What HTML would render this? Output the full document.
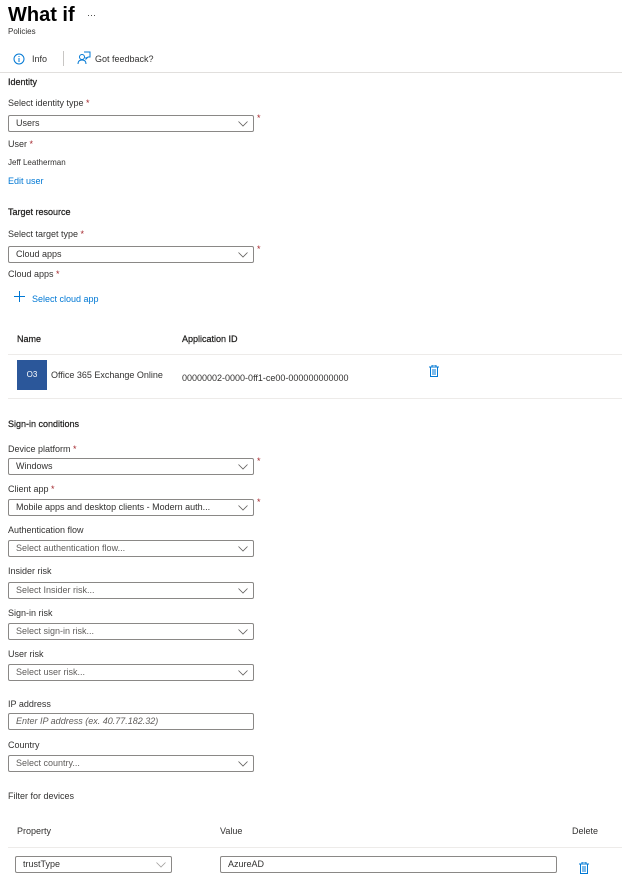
<!DOCTYPE html>
<html><head><meta charset="utf-8"><style>
*{margin:0;padding:0;box-sizing:border-box}
body{width:622px;height:886px;background:#fff;font-family:"Liberation Sans",sans-serif;font-size:9px;color:#323130;position:relative;overflow:hidden}
.a{position:absolute;white-space:nowrap;line-height:12px}
.s{color:#a4262c}
.h{color:#201f1e;-webkit-text-stroke:0.25px #201f1e}
.dd{position:absolute;left:8px;width:246px;height:17px;border:1px solid #8a8886;border-radius:2px;padding-left:7px;line-height:15px;font-size:9px}
.dd.ph{color:#605e5c}
.dd svg{position:absolute;right:5px;top:5px}
.ln{position:absolute;height:1px;background:#edebe9}
.b{color:#0078d4}
</style></head><body>
<div class="a" style="left:8px;top:2px;font-size:20px;line-height:26px;font-weight:bold;color:#000">What if</div>
<div class="a" style="left:87px;top:9px;font-size:9px">···</div>
<div class="a" style="left:8px;top:26px;font-size:8px">Policies</div>
<svg class="a" style="left:13px;top:53px" width="12" height="12" viewBox="0 0 12 12"><circle cx="6" cy="6" r="5" fill="none" stroke="#0078d4" stroke-width="1"/><path d="M6 5v4M6 3v1" stroke="#0078d4" stroke-width="1"/></svg>
<div class="a" style="left:32px;top:53px">Info</div>
<div style="position:absolute;left:63px;top:51px;width:1px;height:15px;background:#c8c6c4"></div>
<svg class="a" style="left:77px;top:51px" width="14" height="14" viewBox="0 0 14 14"><circle cx="5" cy="6" r="2.5" fill="none" stroke="#0078d4"/><path d="M1 13c0-3 2-4 4-4s4 1 4 4M7 1h6v5h-2l-2 2V6" fill="none" stroke="#0078d4"/></svg>
<div class="a" style="left:95px;top:53px">Got feedback?</div>
<div class="ln" style="left:0;top:72px;width:622px;background:#e1dfdd"></div>
<div class="a h" style="left:8px;top:76px">Identity</div>
<div class="a" style="left:8px;top:97px">Select identity type <span class="s">*</span></div>
<div class="dd" style="top:115px">Users<svg width="10" height="6"><path d="M0.5 0.5l4.5 4.5 4.5-4.5" fill="none" stroke="#605e5c" stroke-width="0.8"/></svg></div>
<div class="a s" style="left:257px;top:112px">*</div>
<div class="a" style="left:8px;top:138px">User <span class="s">*</span></div>
<div class="a" style="left:8px;top:157px;font-size:8px">Jeff Leatherman</div>
<div class="a b" style="left:8px;top:175px">Edit user</div>
<div class="a h" style="left:8px;top:206px">Target resource</div>
<div class="a" style="left:8px;top:228px">Select target type <span class="s">*</span></div>
<div class="dd" style="top:246px">Cloud apps<svg width="10" height="6"><path d="M0.5 0.5l4.5 4.5 4.5-4.5" fill="none" stroke="#605e5c" stroke-width="0.8"/></svg></div>
<div class="a s" style="left:257px;top:243px">*</div>
<div class="a" style="left:8px;top:268px">Cloud apps <span class="s">*</span></div>
<svg class="a" style="left:14px;top:291px" width="11" height="11"><path d="M5.5 0v11M0 5.5h11" stroke="#0078d4"/></svg>
<div class="a b" style="left:32px;top:293px">Select cloud app</div>
<div class="a h" style="left:17px;top:333px">Name</div>
<div class="a h" style="left:182px;top:333px">Application ID</div>
<div class="ln" style="left:8px;top:354px;width:614px"></div>
<div style="position:absolute;left:17px;top:360px;width:30px;height:30px;background:#2b579a;color:#fff;font-size:8px;line-height:30px;text-align:center">O3</div>
<div class="a" style="left:51px;top:369px">Office 365 Exchange Online</div>
<div class="a" style="left:182px;top:372px">00000002-0000-0ff1-ce00-000000000000</div>
<svg class="a" style="left:429px;top:365px" width="10" height="12" viewBox="0 0 10 12"><path d="M0 2h10M3 2V0h4v2M1.5 2.5v9h7v-9M4 4v6M6 4v6" fill="none" stroke="#0078d4"/></svg>
<div class="ln" style="left:8px;top:398px;width:614px"></div>
<div class="a h" style="left:8px;top:418px">Sign-in conditions</div>
<div class="a" style="left:8px;top:443px">Device platform <span class="s">*</span></div>
<div class="dd" style="top:458px">Windows<svg width="10" height="6"><path d="M0.5 0.5l4.5 4.5 4.5-4.5" fill="none" stroke="#605e5c" stroke-width="0.8"/></svg></div>
<div class="a s" style="left:257px;top:455px">*</div>
<div class="a" style="left:8px;top:483px">Client app <span class="s">*</span></div>
<div class="dd" style="top:499px">Mobile apps and desktop clients - Modern auth...<svg width="10" height="6"><path d="M0.5 0.5l4.5 4.5 4.5-4.5" fill="none" stroke="#605e5c" stroke-width="0.8"/></svg></div>
<div class="a s" style="left:257px;top:496px">*</div>
<div class="a" style="left:8px;top:524px">Authentication flow</div>
<div class="dd ph" style="top:540px">Select authentication flow...<svg width="10" height="6"><path d="M0.5 0.5l4.5 4.5 4.5-4.5" fill="none" stroke="#605e5c" stroke-width="0.8"/></svg></div>
<div class="a" style="left:8px;top:565px">Insider risk</div>
<div class="dd ph" style="top:582px">Select Insider risk...<svg width="10" height="6"><path d="M0.5 0.5l4.5 4.5 4.5-4.5" fill="none" stroke="#605e5c" stroke-width="0.8"/></svg></div>
<div class="a" style="left:8px;top:607px">Sign-in risk</div>
<div class="dd ph" style="top:623px">Select sign-in risk...<svg width="10" height="6"><path d="M0.5 0.5l4.5 4.5 4.5-4.5" fill="none" stroke="#605e5c" stroke-width="0.8"/></svg></div>
<div class="a" style="left:8px;top:648px">User risk</div>
<div class="dd ph" style="top:664px">Select user risk...<svg width="10" height="6"><path d="M0.5 0.5l4.5 4.5 4.5-4.5" fill="none" stroke="#605e5c" stroke-width="0.8"/></svg></div>
<div class="a" style="left:8px;top:698px">IP address</div>
<div class="dd ph" style="top:713px;font-style:italic">Enter IP address (ex. 40.77.182.32)</div>
<div class="a" style="left:8px;top:739px">Country</div>
<div class="dd ph" style="top:755px">Select country...<svg width="10" height="6"><path d="M0.5 0.5l4.5 4.5 4.5-4.5" fill="none" stroke="#605e5c" stroke-width="0.8"/></svg></div>
<div class="a" style="left:8px;top:790px">Filter for devices</div>
<div class="a" style="left:17px;top:825px">Property</div>
<div class="a" style="left:220px;top:825px">Value</div>
<div class="a" style="left:572px;top:825px">Delete</div>
<div class="ln" style="left:8px;top:847px;width:614px"></div>
<div class="dd" style="left:15px;top:856px;width:157px">trustType<svg width="10" height="6"><path d="M0.5 0.5l4.5 4.5 4.5-4.5" fill="none" stroke="#a19f9d" stroke-width="0.8"/></svg></div>
<div class="dd" style="left:220px;top:856px;width:337px">AzureAD</div>
<svg class="a" style="left:579px;top:862px" width="10" height="12" viewBox="0 0 10 12"><path d="M0 2h10M3 2V0h4v2M1.5 2.5v9h7v-9M4 4v6M6 4v6" fill="none" stroke="#0078d4"/></svg>
</body></html>
